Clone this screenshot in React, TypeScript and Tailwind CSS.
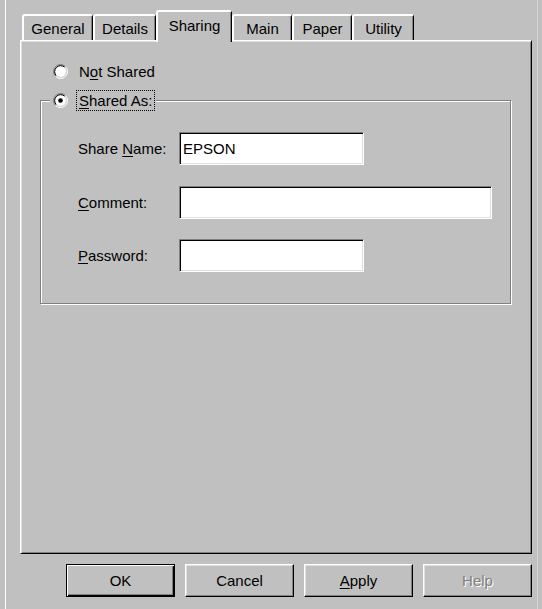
import React from "react";

function Radio({ checked }: { checked?: boolean }) {
  return (
    <svg width="15" height="15" viewBox="0 0 15 15" className="shrink-0">
      <circle cx="7.5" cy="7.5" r="5.6" fill="#fff" />
      <path d="M2.55 12.45 A7 7 0 0 1 12.45 2.55" fill="none" stroke="#808080" strokeWidth="1" />
      <path d="M12.45 2.55 A7 7 0 0 1 2.55 12.45" fill="none" stroke="#fff" strokeWidth="1" />
      <path d="M3.26 11.74 A6 6 0 0 1 11.74 3.26" fill="none" stroke="#000" strokeWidth="1" />
      <path d="M11.74 3.26 A6 6 0 0 1 3.26 11.74" fill="none" stroke="#dfdfdf" strokeWidth="1" />
      {checked && <circle cx="7.5" cy="7.5" r="2.3" fill="#000" />}
    </svg>
  );
}

const tabs = [
  { label: "General", cls: "w-[71px]" },
  { label: "Details", cls: "w-[63px]" },
  { label: "Sharing", cls: "w-[76px]", sel: true },
  { label: "Main", cls: "w-[60px]" },
  { label: "Paper", cls: "w-[60px]" },
  { label: "Utility", cls: "w-[62px]" },
];

function Input({ w, value }: { w: string; value?: string }) {
  return (
    <div
      className={`${w} h-[33px] bg-white border border-[#808080] border-r-white border-b-white shadow-[inset_1px_1px_0_#000,inset_-1px_-1px_0_#dfdfdf] flex items-center pl-[3px]`}
    >
      {value}
    </div>
  );
}

function Btn({ children, kind }: { children: React.ReactNode; kind?: "default" | "disabled" }) {
  const base = "w-[109px] h-[33px] flex items-center justify-center";
  if (kind === "default") {
    return (
      <div className={`${base} border border-black shadow-[inset_1px_1px_0_#fff,inset_-1px_-1px_0_#000,inset_-2px_-2px_0_#808080]`}>
        {children}
      </div>
    );
  }
  return (
    <div
      className={`${base} border border-white border-r-black border-b-black shadow-[inset_-1px_-1px_0_#808080,inset_1px_1px_0_#dfdfdf] ${
        kind === "disabled" ? "text-[#808080] [text-shadow:1px_1px_0_#fff]" : ""
      }`}
    >
      {children}
    </div>
  );
}

export default function App() {
  return (
    <div className="w-[542px] h-[609px] bg-[#c0c0c0] text-black overflow-hidden font-['Liberation_Sans',Arial,sans-serif] text-[15px] leading-none">
      <div className="ml-[5px] w-[533px] h-full border-l border-l-white border-r border-r-[#d6d6d6] pt-[10px]">
        {/* Tabs */}
        <div className="flex items-end h-[30px] ml-[16px]">
          {tabs.map((t) =>
            t.sel ? (
              <div
                key={t.label}
                className={`${t.cls} relative z-10 h-[32px] -mb-[2px] pb-[4px] bg-[#c0c0c0] border-t-2 border-l-2 border-white border-r border-r-black shadow-[inset_-1px_0_0_#808080] rounded-t-[3px] flex items-center justify-center`}
              >
                {t.label}
              </div>
            ) : (
              <div
                key={t.label}
                className={`${t.cls} h-[26px] pt-[1px] border-t-2 border-l-2 border-white border-r border-r-black shadow-[inset_-1px_0_0_#808080] rounded-t-[3px] flex items-center justify-center`}
              >
                {t.label}
              </div>
            )
          )}
        </div>

        {/* Panel */}
        <div className="ml-[14px] w-[512px] h-[514px] border border-white border-r-black border-b-black shadow-[inset_1px_1px_0_#dfdfdf,inset_-1px_-1px_0_#808080]">
          <div className="mt-[20px] pl-[32px] h-[21px] flex items-center gap-[8px]">
            <Radio />
            <span className="border border-transparent px-[2px] h-[21px] flex items-center">
              N<u className="underline underline-offset-2">o</u>t Shared
            </span>
          </div>

          <fieldset className="mt-[8px] ml-[19px] w-[471px] border border-[#808080] shadow-[inset_1px_1px_0_#fff,1px_1px_0_#fff] pb-[31px]">
            <legend className="ml-[9px] pl-[3px] pr-[1px] bg-[#c0c0c0]">
              <div className="flex items-center h-[21px] gap-[8px]">
                <Radio checked />
                <span className="border border-dotted border-black px-[2px] h-[21px] flex items-center">
                  <u className="underline underline-offset-2">S</u>hared As:
                </span>
              </div>
            </legend>

            <div className="mt-[21px] pl-[37px] flex flex-col">
              <div className="flex items-center h-[33px]">
                <span className="w-[101px]">
                  Share <u className="underline underline-offset-2">N</u>ame:
                </span>
                <Input w="w-[185px]" value="EPSON" />
              </div>
              <div className="mt-[21px] flex items-center h-[33px]">
                <span className="w-[101px]">
                  <u className="underline underline-offset-2">C</u>omment:
                </span>
                <Input w="w-[313px]" />
              </div>
              <div className="mt-[20px] flex items-center h-[33px]">
                <span className="w-[101px]">
                  <u className="underline underline-offset-2">P</u>assword:
                </span>
                <Input w="w-[185px]" />
              </div>
            </div>
          </fieldset>
        </div>

        {/* Buttons */}
        <div className="ml-[14px] w-[512px] mt-[10px] flex justify-end gap-[10px]">
          <Btn kind="default">OK</Btn>
          <Btn>Cancel</Btn>
          <Btn>
            <span>
              <u className="underline underline-offset-2">A</u>pply
            </span>
          </Btn>
          <Btn kind="disabled">Help</Btn>
        </div>
      </div>
    </div>
  );
}
